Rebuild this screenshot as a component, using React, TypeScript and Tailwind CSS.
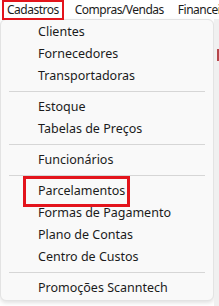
import React from "react";

type Entry = { label: string; boxed?: boolean } | "sep";

const ITEMS: Entry[] = [
  { label: "Clientes" },
  { label: "Fornecedores" },
  { label: "Transportadoras" },
  "sep",
  { label: "Estoque" },
  { label: "Tabelas de Preços" },
  "sep",
  { label: "Funcionários" },
  "sep",
  { label: "Parcelamentos", boxed: true },
  { label: "Formas de Pagamento" },
  { label: "Plano de Contas" },
  { label: "Centro de Custos" },
  "sep",
  { label: "Promoções Scanntech" },
];

export default function App() {
  return (
    <div
      className="flex h-[306px] w-[219px] flex-col overflow-hidden bg-white text-[12px] text-[#1b1b1b]"
      style={{ fontFamily: '"Noto Sans", "Segoe UI", sans-serif' }}
    >
      {/* menu bar */}
      <div className="flex h-[19px] shrink-0 items-center whitespace-nowrap leading-none tracking-[-0.5px]">
        <span className="relative ml-[7px] mr-[16px]">
          Cadastros
          <span className="absolute -top-[4px] -bottom-[4px] -left-[5px] -right-[5px] border-2 border-[#e3141c]" />
        </span>
        <span className="mr-[14px]">Compras/Vendas</span>
        <span>Financeiro</span>
      </div>

      <div className="flex flex-1">
        {/* dropdown */}
        <div className="flex h-[282px] w-[214px] flex-col rounded-[6px] border border-[#e3e3e3] bg-[#f9f9f9] py-[1px] text-[12.5px] shadow-[0_2px_4px_rgba(0,0,0,0.12)]">
          {ITEMS.map((it, i) =>
            it === "sep" ? (
              <div key={i} className="flex h-[9px] items-center px-[8px]">
                <div className="h-px w-full bg-[#d6d6d6]" />
              </div>
            ) : (
              <div key={i} className="flex h-[22px] items-center pl-[37px]">
                <span className="relative">
                  {it.label}
                  {it.boxed && (
                    <span className="absolute -top-[6px] -bottom-[7px] -left-[15px] -right-[5px] border-[3px] border-[#e3141c]" />
                  )}
                </span>
              </div>
            )
          )}
        </div>
        {/* underlying window edge */}
        <div className="flex w-[5px] flex-col bg-[#f0f0f0]">
          <div className="mt-[30px] ml-[3px] h-[12px] w-[2px] bg-[#b5474b]" />
        </div>
      </div>
    </div>
  );
}
